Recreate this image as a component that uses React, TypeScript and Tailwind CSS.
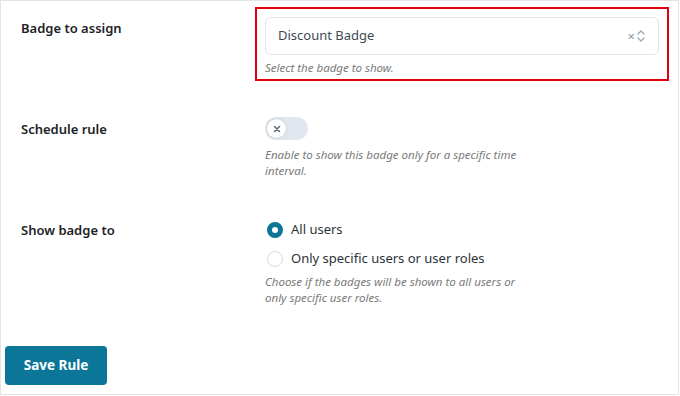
import { useState } from "react"

const font = { fontFamily: '"Noto Sans", "Open Sans", sans-serif' }

const Help = ({ children }: { children: React.ReactNode }) => (
  <p className="text-[11.5px] leading-[16px] italic text-[#7a7a7a] w-[268px]">{children}</p>
)

const App = () => {
  const [enabled, setEnabled] = useState(false)
  const [who, setWho] = useState("all")

  return (
    <div className="w-[680px] h-[396px] bg-white" style={font}>
      <div className="w-[679px] h-[395px] border border-[#e4e4e4] bg-white pt-[6px]">
        {/* Badge to assign */}
        <div className="flex">
          <div className="w-[264px] pl-[20px] pt-[11px] text-[13px] leading-[20px] font-semibold text-[#1d2327]">
            Badge to assign
          </div>
          <div className="ml-[-10px] w-[414px] border-2 border-[#e3000f] px-[8px] pt-[8px] pb-[3px]">
            <div className="flex items-center h-[38px] rounded-[6px] border border-[#e1e5ec] pl-[12px] pr-[12px] bg-white">
              <span className="flex-1 text-[13px] text-[#3f4a56]">Discount Badge</span>
              <span className="text-[13px] leading-none text-[#8a94a3] mr-[1px]">×</span>
              <svg width="10" height="14" viewBox="0 0 10 14" fill="none" stroke="#9aa5b4" strokeWidth="1.2" strokeLinecap="round" strokeLinejoin="round">
                <path d="M2 5 L5 2 L8 5" />
                <path d="M2 9 L5 12 L8 9" />
              </svg>
            </div>
            <p className="mt-[5px] text-[11.5px] leading-[16px] italic text-[#7a7a7a]">Select the badge to show.</p>
          </div>
        </div>

        {/* Schedule rule */}
        <div className="flex mt-[36px]">
          <div className="w-[264px] pl-[20px] pt-[2px] text-[13px] leading-[20px] font-semibold text-[#1d2327]">
            Schedule rule
          </div>
          <div>
            <button
              onClick={() => setEnabled(!enabled)}
              className={`flex items-center w-[43px] h-[23px] rounded-full px-[2px] ${enabled ? "bg-[#0b7697] justify-end" : "bg-[#e2e7ef]"}`}
            >
              <span className="flex items-center justify-center w-[19px] h-[19px] rounded-full bg-white shadow-[0_0_2px_rgba(0,0,0,0.25)]">
                <svg width="8" height="8" viewBox="0 0 8 8" stroke="#5f6b7a" strokeWidth="1.6" strokeLinecap="round">
                  <path d="M1.5 1.5 L6.5 6.5 M6.5 1.5 L1.5 6.5" />
                </svg>
              </span>
            </button>
            <div className="mt-[7px]">
              <Help>Enable to show this badge only for a specific time interval.</Help>
            </div>
          </div>
        </div>

        {/* Show badge to */}
        <div className="flex mt-[41px]">
          <div className="w-[264px] pl-[20px] text-[13px] leading-[20px] font-semibold text-[#1d2327]">
            Show badge to
          </div>
          <div>
            <label className="flex items-center gap-[8px] h-[20px] cursor-pointer" onClick={() => setWho("all")}>
              <span className={`ml-[2px] w-[16px] h-[16px] rounded-full ${who === "all" ? "border-[5px] border-[#0b7697]" : "border border-[#d3dae3]"}`} />
              <span className="text-[13px] text-[#2c3338]">All users</span>
            </label>
            <label className="flex items-center gap-[8px] h-[20px] mt-[9px] cursor-pointer" onClick={() => setWho("specific")}>
              <span className={`ml-[2px] w-[16px] h-[16px] rounded-full ${who === "specific" ? "border-[5px] border-[#0b7697]" : "border border-[#d3dae3]"}`} />
              <span className="text-[13px] text-[#2c3338]">Only specific users or user roles</span>
            </label>
            <div className="mt-[5px]">
              <Help>Choose if the badges will be shown to all users or only specific user roles.</Help>
            </div>
          </div>
        </div>

        <div className="pl-[4px] mt-[40px]">
          <button className="w-[102px] h-[39px] rounded-[4px] bg-[#0b7697] text-white text-[13.5px] font-bold">
            Save Rule
          </button>
        </div>
      </div>
    </div>
  )
}

export default App
